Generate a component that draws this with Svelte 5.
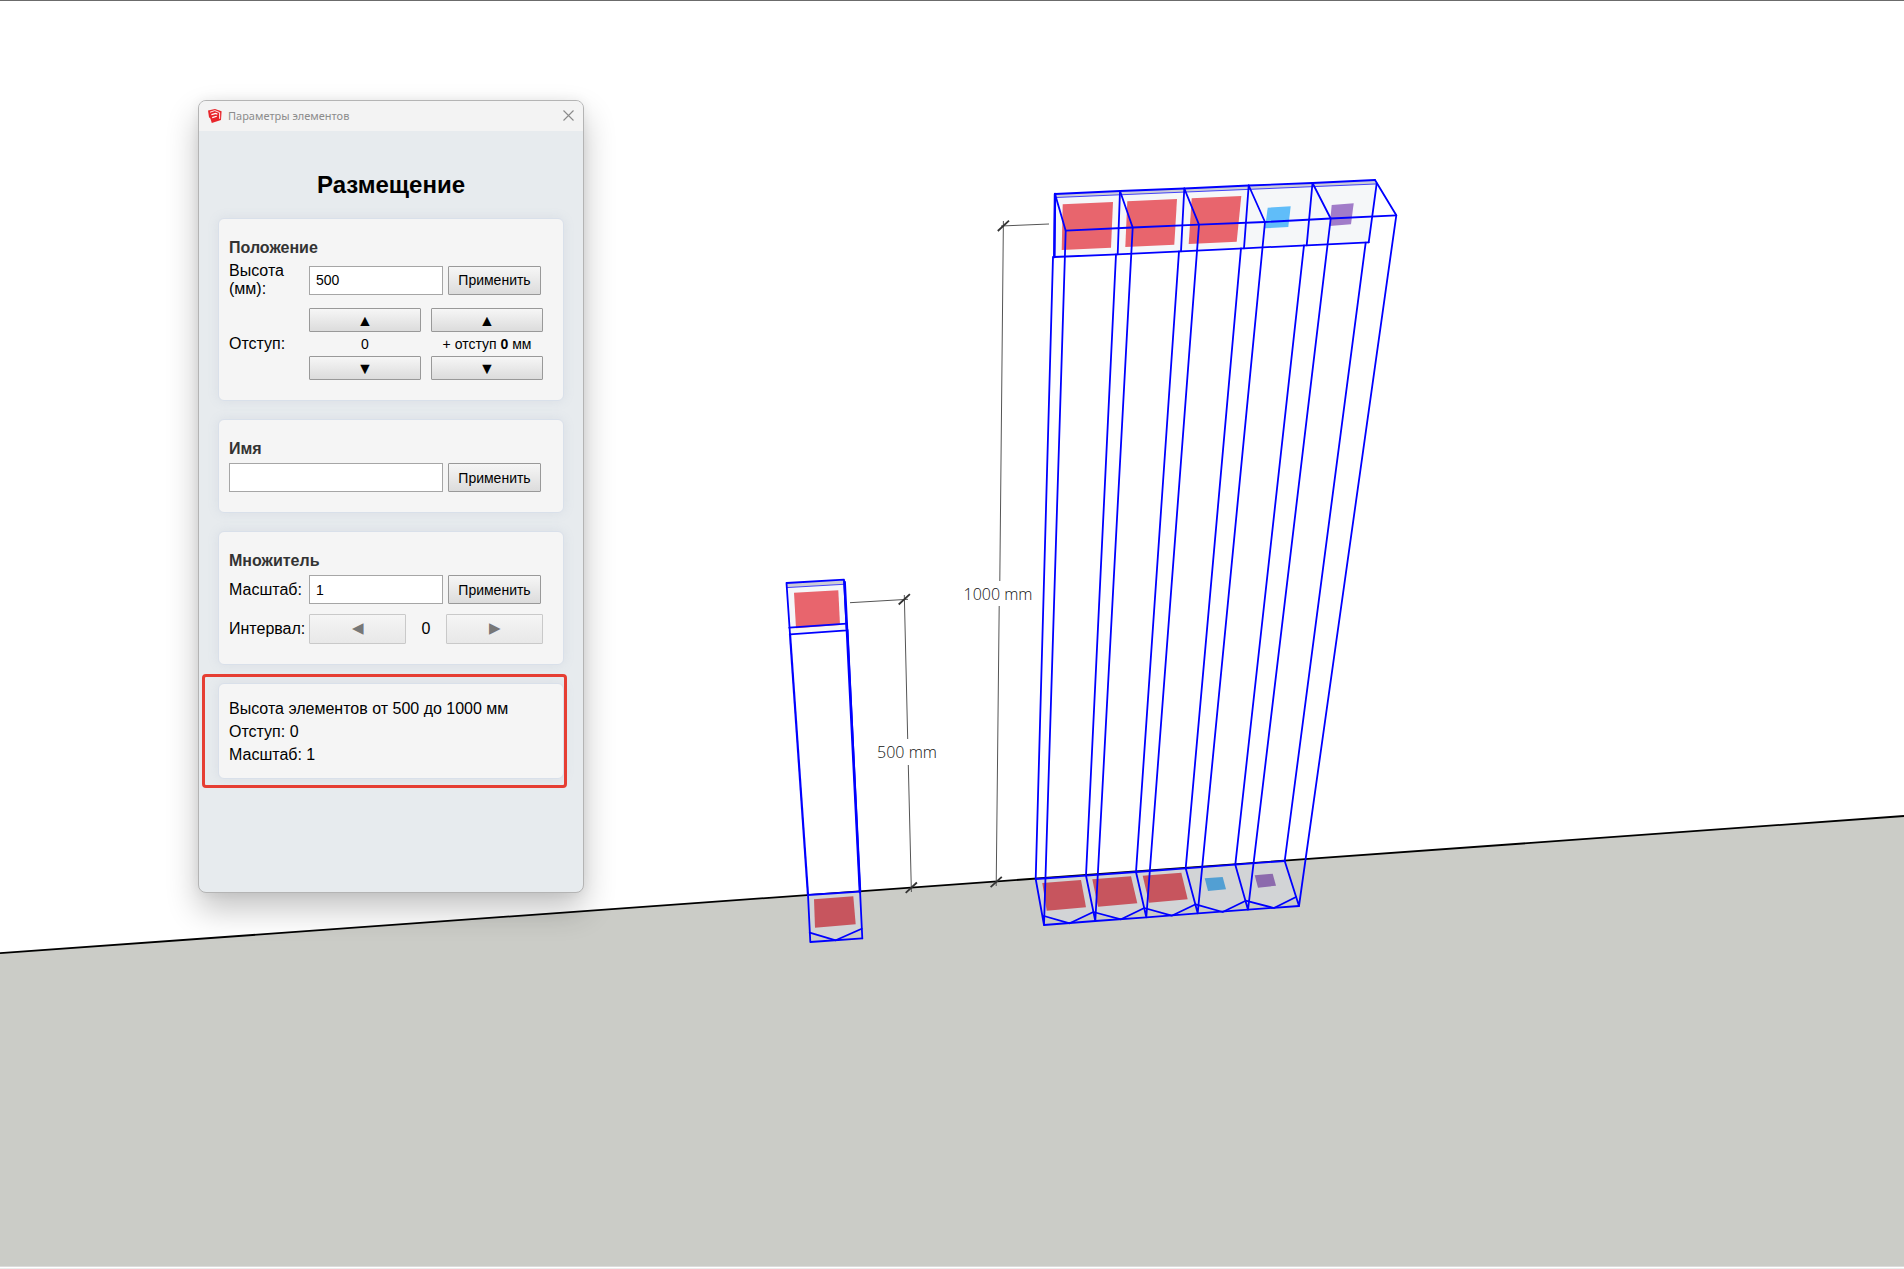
<script lang="ts">
  let height = $state('500');
  let name = $state('');
  let scale = $state('1');
  let offset = $state(0);
  let extra = $state(0);

  const blue = '#0000ff';

  // back rail and front rail of the five-box row, left to right
  const topBack = [[1055, 194], [1120, 191], [1184.3, 188.5], [1248.7, 185.5], [1312.5, 183], [1375, 180]];
  const topFront = [[1065.7, 230.7], [1132.7, 227.5], [1199, 224.7], [1265, 222], [1330.7, 218.5], [1396.3, 215.3]];
  const faceBottom = [[1054.3, 257], [1117.7, 254.3], [1181, 251.3], [1244, 248.3], [1306.7, 245.3], [1368.7, 242.3]];
  const legTop = [[1053, 257], [1116, 254.3], [1179, 251.3], [1241, 248.3], [1304, 245.3], [1365.7, 242.6]];
  const floorBack = [[1035.7, 879], [1086, 875.7], [1136, 872], [1185.7, 868.3], [1235.3, 864.7], [1284.7, 861]];
  const floorFront = [[1044, 925], [1095.3, 921], [1146.3, 917.3], [1197.7, 913.3], [1248, 909.7], [1299, 906]];
  const zigzag = '1044,916 1069.7,923.3 1093.3,912 1121,919.3 1144.3,908 1171.7,915.7 1195.7,904.3 1222.7,912 1245.7,900.7 1274,908 1296,897';

  const swatches = [
    { fill: '#e8656d', points: '1062.7,204.3 1113,202 1111,247.7 1061.7,250' },
    { fill: '#e8656d', points: '1127.3,201.3 1177,199 1174.3,244.7 1125.3,247' },
    { fill: '#e8656d', points: '1191.7,198.3 1241.3,196 1236.7,241.7 1188.7,244' },
    { fill: '#60bdf9', points: '1267.7,207.7 1290.7,206.3 1288.3,227 1265,228.3' },
    { fill: '#a17cc9', points: '1331.7,205 1353.7,203.3 1351,224.3 1329.7,226' },
    { fill: '#c7555e', points: '1042.3,883 1081,880 1086,907.3 1046.7,910.7' },
    { fill: '#c7555e', points: '1092.3,879.3 1131,876.3 1137.3,903.3 1098,906.7' },
    { fill: '#c7555e', points: '1142.7,875.7 1181.3,872.7 1187.7,899.3 1149,902.7' },
    { fill: '#529fd3', points: '1204.7,878.3 1222.7,877 1226,889.3 1208,891' },
    { fill: '#8c6aad', points: '1254.7,875.3 1272.7,873.7 1276,885.7 1258,887.7' },
    { fill: '#e8656d', points: '794,592.7 838.3,590.3 840,625 796,628.3' },
    { fill: '#c7555e', points: '814,899.3 853.3,896.3 855.7,924.3 815,927.7' }
  ];

  const dimensionLines = [
    [850, 602.7, 908, 599.3],
    [904.3, 595, 907.7, 739],
    [908.3, 765, 911.4, 892],
    [1049, 224, 1001, 226],
    [1003.4, 221, 999.8, 581],
    [999.2, 606, 996.2, 886]
  ];

  const ticks = [[904.3, 599.3], [911.3, 887.7], [1003.4, 225.8], [996.2, 882]];
</script>

<main class="scene">
  <svg class="viewport" viewBox="0 0 1904 1269" preserveAspectRatio="none" aria-hidden="true">
    <polygon points="0,953.2 1904,816 1904,1266 0,1266" fill="#cbccc7" />
    <line x1="0" y1="953.2" x2="1904" y2="816" stroke="#000" stroke-width="1.8" />
    <rect width="1904" height="1" fill="#6b6b6b" />
    <rect y="1266" width="1904" height="1" fill="#dcdcdc" />
    <rect y="1267" width="1904" height="1" fill="#fff" />
    <rect y="1268" width="1904" height="1" fill="#eee" />

    <polygon points="1055,194 1375,180 1376.7,183.3 1368.7,242.3 1054.3,257" fill="#f5f7f9" />
    <polygon points="1055,194 1375,180 1376,184 1056,197.5" fill="#cbccd6" />
    <polygon points="1035.7,879 1284.7,861 {zigzag.split(' ').reverse().join(' ')}" fill="#d2d4d6" />
    <polygon points="786.7,583 844,579.7 846.7,630.3 790,634.3" fill="#f5f7f9" />
    <polygon points="786.7,583 844,579.7 844,584.3 787,587.6" fill="#cbccd6" />
    <polygon points="807.7,895 860,891.7 861.7,928.7 835.7,940.3 809.7,932.7" fill="#d2d4d6" />

    {#each swatches as s}
      <polygon points={s.points} fill={s.fill} />
    {/each}

    <g fill="none" stroke={blue} stroke-width="1.8" stroke-linejoin="round" stroke-linecap="round">
      <polyline points={topBack.join(' ')} />
      <polyline points={topFront.join(' ')} />
      <polyline points={faceBottom.join(' ')} />
      <polyline points={floorBack.join(' ')} />
      <polyline points={floorFront.join(' ')} />
      <polyline points={zigzag} />
      <line x1="1056" y1="197.5" x2="1376" y2="184" stroke-width="1" stroke-opacity="0.7" />
      <line x1="1055" y1="194" x2="1054.3" y2="257" stroke-width="2.4" />
      {#each topBack as p, i}
        <polyline points="{p} {topFront[i]} {floorFront[i]} {floorBack[i]} {legTop[i]}" />
        <polyline points="{i === 5 ? [1376.7, 183.3] : p} {faceBottom[i]}" />
      {/each}

      <polyline points="790,634.3 786.5,583 844,579.7 846.7,630.3 790,634.3" />
      <line x1="789.3" y1="627.7" x2="846.7" y2="623.7" />
      <line x1="787" y1="587.6" x2="844" y2="584.3" stroke-width="1" stroke-opacity="0.7" />
      <line x1="790" y1="634" x2="808" y2="895" stroke-width="2.2" />
      <polyline points="808,895 810.3,942 862.3,938.3" />
      <line x1="844.6" y1="582" x2="860" y2="892" stroke-width="2.6" />
      <line x1="847.6" y1="630" x2="862.3" y2="938.3" />
      <line x1="807.7" y1="895" x2="860" y2="891.7" />
      <polyline points="809.7,932.7 835.7,940.3 861.7,928.7" />
    </g>

    <g stroke="#555" stroke-width="1">
      {#each dimensionLines as [x1, y1, x2, y2]}
        <line {x1} {y1} {x2} {y2} />
      {/each}
    </g>
    <g stroke="#333" stroke-width="1.8">
      {#each ticks as [x, y]}
        <line x1={x - 5.6} y1={y + 5.2} x2={x + 5.6} y2={y - 5.2} />
      {/each}
    </g>
    <g class="dimension" text-anchor="middle">
      <text x="907" y="758">500 mm</text>
      <text x="998" y="600">1000 mm</text>
    </g>
  </svg>

  <section class="dialog" aria-labelledby="dialog-title">
    <header class="titlebar">
      <svg class="logo" viewBox="0 0 14 14" aria-hidden="true">
        <path d="M0 1.4 7 0l6.6 2.2L13 11 3.8 14 2.4 9.4 1 8.2Z" fill="#e8262b" />
        <path d="M2 3.2 6.8 1.6l4.8 2v6.2" fill="none" stroke="#fff" stroke-width=".9" />
        <path d="M3.4 5.6 7.8 4.4l1.6.8M4.2 8.6l4.6-1.4" fill="none" stroke="#fff" stroke-width="1.2" />
      </svg>
      <span id="dialog-title">Параметры элементов</span>
      <button class="close" aria-label="Закрыть">
        <svg viewBox="0 0 11 11" aria-hidden="true">
          <path d="M.5.5l10 10M10.5.5l-10 10" stroke="#8a8a8a" stroke-width="1.1" />
        </svg>
      </button>
    </header>

    <div class="content">
      <h1>Размещение</h1>

      <div class="card">
        <h2>Положение</h2>
        <div class="row tall">
          <label for="height">Высота (мм):</label>
          <input id="height" type="text" bind:value={height} />
          <button class="apply">Применить</button>
        </div>
        <div class="row offsets">
          <span class="caption">Отступ:</span>
          <div class="stepper">
            <button aria-label="Увеличить отступ" onclick={() => offset++}>▲</button>
            <output>{offset}</output>
            <button aria-label="Уменьшить отступ" onclick={() => offset--}>▼</button>
          </div>
          <div class="stepper">
            <button aria-label="Увеличить добавку" onclick={() => extra++}>▲</button>
            <output>+ отступ <b>{extra}</b> мм</output>
            <button aria-label="Уменьшить добавку" onclick={() => extra--}>▼</button>
          </div>
        </div>
      </div>

      <div class="card">
        <h2><label for="name">Имя</label></h2>
        <div class="row">
          <input id="name" type="text" bind:value={name} />
          <button class="apply">Применить</button>
        </div>
      </div>

      <div class="card">
        <h2>Множитель</h2>
        <div class="row">
          <label for="scale">Масштаб:</label>
          <input id="scale" type="text" bind:value={scale} />
          <button class="apply">Применить</button>
        </div>
        <div class="row interval">
          <span class="caption">Интервал:</span>
          <button disabled aria-label="Уменьшить интервал">◀</button>
          <output>0</output>
          <button disabled aria-label="Увеличить интервал">▶</button>
        </div>
      </div>

      <div class="card summary">
        <p>Высота элементов от 500 до 1000 мм</p>
        <p>Отступ: {offset}</p>
        <p>Масштаб: {scale}</p>
        <div class="highlight"></div>
      </div>
    </div>
  </section>
</main>

<style>
  :global(body) {
    margin: 0;
    background: #fff;
  }

  .scene {
    position: relative;
    min-height: 100vh;
    overflow: hidden;
    font-family: 'Liberation Sans', Arial, sans-serif;
    font-size: 16px;
    line-height: 18px;
    color: #000;
  }

  .viewport {
    position: absolute;
    inset: 0;
    width: 100%;
    height: 100%;
  }

  .dimension {
    font-family: 'Open Sans', 'Noto Sans', sans-serif;
    font-size: 16px;
    font-weight: 300;
    fill: #111;
  }

  .dialog {
    position: absolute;
    left: 198px;
    top: 100px;
    box-sizing: border-box;
    width: 386px;
    border: 1px solid #b4b4b4;
    border-radius: 8px;
    background: #e7ebee;
    box-shadow: 0 16px 32px rgba(0, 0, 0, 0.24), 0 0 12px rgba(0, 0, 0, 0.06);
  }

  .titlebar {
    display: flex;
    align-items: center;
    height: 30px;
    padding: 0 9px;
    border-radius: 7px 7px 0 0;
    background: #f3f3f3;
    font-family: 'Noto Sans', 'Open Sans', sans-serif;
    font-size: 11px;
    color: #8c8c8c;
  }

  .logo {
    width: 14px;
    height: 14px;
    margin-right: 6px;
  }

  .close {
    display: flex;
    margin-left: auto;
    padding: 0 0 2px;
    border: 0;
    background: none;
  }

  .close svg {
    width: 11px;
    height: 11px;
  }

  .content {
    display: flex;
    flex-direction: column;
    gap: 18px;
    padding: 39px 19px 113px;
  }

  h1 {
    margin: 0;
    font-size: 24px;
    line-height: 30px;
    text-align: center;
  }

  .card {
    position: relative;
    padding: 19px 20px 20px 10px;
    border: 1px solid #d9e0ea;
    border-radius: 6px;
    background: #f5f5f5;
    box-shadow: 0 0 12px rgba(120, 140, 170, 0.12);
  }

  h2 {
    margin: 0 0 4px;
    font-size: 16px;
    line-height: 20px;
    color: #333;
  }

  .row {
    display: flex;
    align-items: center;
    gap: 5px;
  }

  .tall {
    min-height: 36px;
  }

  .row > label,
  .caption {
    flex: none;
    width: 75px;
  }

  input {
    flex: 1;
    box-sizing: border-box;
    min-width: 0;
    height: 29px;
    padding: 0 6px;
    border: 1px solid #a6a6a6;
    background: #fff;
    font: 14px 'Liberation Sans', Arial, sans-serif;
    color: #000;
  }

  .card button {
    box-sizing: border-box;
    padding: 0;
    border: 1px solid #999;
    border-radius: 1px;
    background: linear-gradient(#f6f6f6, #dcdcdc);
    font: 14px 'Liberation Sans', Arial, sans-serif;
    color: #000;
  }

  .card .apply {
    width: 93px;
    height: 29px;
    margin-right: 2px;
  }

  .offsets {
    gap: 10px;
    margin-top: 10px;
  }

  .offsets .caption {
    width: 70px;
  }

  .stepper {
    display: flex;
    flex: 1;
    flex-direction: column;
    font-size: 14px;
    line-height: 24px;
    text-align: center;
  }

  .card .stepper button {
    height: 24px;
    padding-top: 2px;
    font-size: 16px;
    line-height: 20px;
  }

  .interval {
    margin-top: 10px;
  }

  .card .interval button {
    flex: 1;
    height: 30px;
    padding-bottom: 3px;
    font-size: 15px;
  }

  .interval output {
    width: 30px;
    text-align: center;
  }

  .card button:disabled {
    border-color: #c9c9c9;
    background: linear-gradient(#f5f5f5, #e8e8e8);
    color: #777;
  }

  .summary {
    padding: 13px 20px 12px 10px;
  }

  .summary p {
    margin: 0;
    line-height: 23px;
  }

  /* marker frame around the summary */
  .highlight {
    position: absolute;
    inset: -10px -4px -10px -17px;
    border: 3px solid #e63e33;
    border-radius: 4px;
    pointer-events: none;
  }
</style>
